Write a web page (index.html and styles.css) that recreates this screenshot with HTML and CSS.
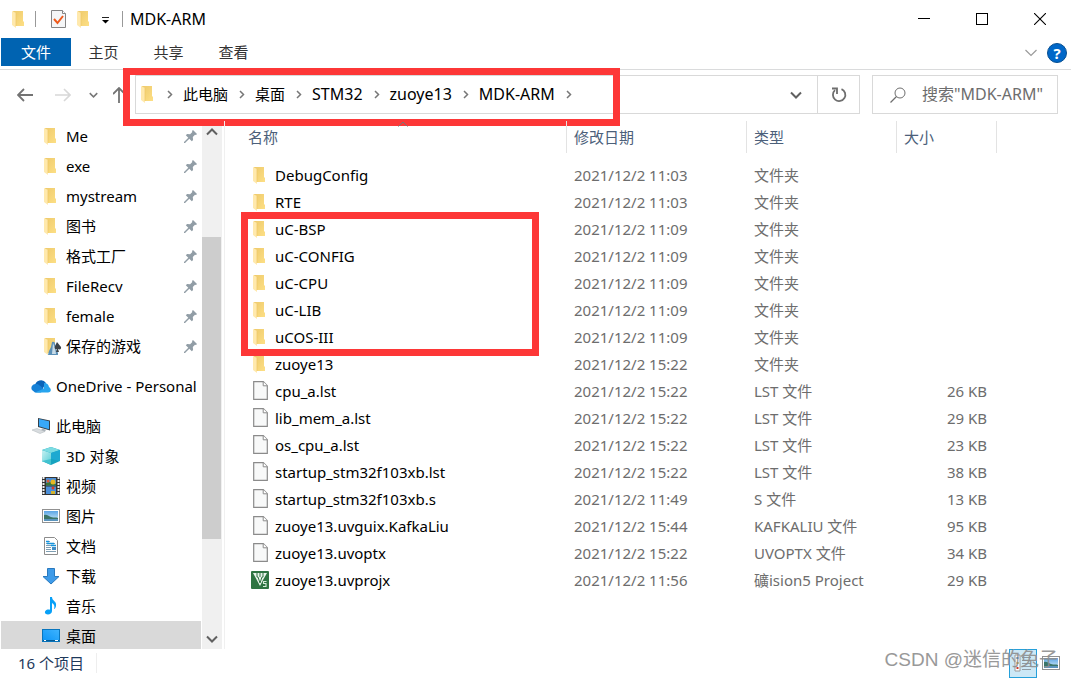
FILE: index.html
```html
<!DOCTYPE html>
<html lang="zh-CN">
<head>
    <meta charset="UTF-8">
    <meta name="viewport" content="width=device-width, initial-scale=1.0">
    <title>MDK-ARM</title>
    <link rel="stylesheet" href="styles.css">
</head>
<body>

    <!-- icons -->
    <svg class="sprite" aria-hidden="true">
        <defs>
            <linearGradient id="folderBack" x1="0" y1="0" x2="1" y2="1">
                <stop offset="0" stop-color="#eeca6c"/>
                <stop offset="1" stop-color="#fddf85"/>
            </linearGradient>
            <linearGradient id="cubeLeft" x1="0" y1="0" x2="1" y2="1">
                <stop offset="0" stop-color="#c9f1f2"/>
                <stop offset="1" stop-color="#5fd0d8"/>
            </linearGradient>
            <linearGradient id="screenBlue" x1="0" y1="1" x2="1" y2="0">
                <stop offset="0" stop-color="#0a93f5"/>
                <stop offset="1" stop-color="#3fb4ff"/>
            </linearGradient>
            <linearGradient id="sky" x1="0" y1="0" x2="0" y2="1">
                <stop offset="0" stop-color="#5aa5e6"/>
                <stop offset="1" stop-color="#d5edf8"/>
            </linearGradient>
        </defs>
        <symbol id="folder" viewBox="0 0 13 18">
            <path d="M1 1h10v10l1 1v4H3z" fill="url(#folderBack)"/>
            <path d="M0 1l4 2v15L0 15z" fill="#ffe9ad"/>
            <path d="M4 3v13" stroke="#eec765" stroke-width=".7"/>
        </symbol>
        <symbol id="file" viewBox="0 0 15 19">
            <path d="M.7.7h9.6l4 4v13.6H.7z" fill="#f8f9f9" stroke="#8b8b8b" stroke-width="1.2"/>
            <path d="M10.2.7v4.1h4.1" fill="#fff" stroke="#8b8b8b"/>
        </symbol>
        <symbol id="keil" viewBox="0 0 18 18">
            <rect width="18" height="18" rx="1" fill="#2f7442"/>
            <path d="M2 2h14l-4 7-3 6z" fill="#e8f3ea"/>
            <path d="M6 2v4h1l2 6 2-6h1V2M9 2v4" fill="none" stroke="#2f7442"/>
            <path d="M15.500 10.500h-3v2h2.500v3h-3" fill="none" stroke="#d3ead8" stroke-width="1.1"/>
        </symbol>
        <symbol id="pin" viewBox="0 0 13 13">
            <path d="M9 0l4 4-1 1-1-.3-2.200 2.200.3 3L7.800 11.200 5.300 8.700 1 13H0v-1l4.300-4.300L1.800 5.200 3.100 3.900l3 .3L8.300 2 8 1z" fill="#919da6"/>
        </symbol>
        <symbol id="chevron" viewBox="0 0 6 9">
            <path d="M1 1l3.500 3.500L1 8" fill="none" stroke="#777" stroke-width="1.500"/>
        </symbol>
        <symbol id="down" viewBox="0 0 12 8">
            <path d="M1 1.500l5 5 5-5" fill="none" stroke="currentColor" stroke-width="2"/>
        </symbol>
        <symbol id="picture" viewBox="0 0 18 14">
            <rect x=".5" y=".5" width="17" height="13" fill="#fff" stroke="#919191"/>
            <rect x="2" y="2" width="14" height="10" fill="url(#sky)"/>
            <path d="M2 6c3-1 4 1 7 2s5 0 7 1v1H2z" fill="#3b7568"/>
            <path d="M2 10h14v2H2z" fill="#5a94bd"/>
        </symbol>
    </svg>

    <div class="window">
        <header class="titlebar">
            <svg class="icon-folder"><use href="#folder"/></svg>
            <span class="divider first"></span>
            <svg class="icon-check" viewBox="0 0 15 18">
                <path d="M.5.500h11l3 3v14H.5z" fill="#f5f6f7" stroke="#858585"/>
                <path d="M11.500.500v3h3" fill="#fff" stroke="#858585"/>
                <path d="M3 9l3.500 4L12 6" fill="none" stroke="#ee5a1c" stroke-width="2"/>
            </svg>
            <svg class="icon-folder"><use href="#folder"/></svg>
            <svg class="icon-customize" viewBox="0 0 7 7"><path d="M0 .500h7" stroke="#222"/><path d="M0 3h7L3.500 6.500z" fill="#000"/></svg>
            <span class="divider"></span>
            <h1>MDK-ARM</h1>
            <div class="caption">
                <button type="button" aria-label="最小化"><svg viewBox="0 0 12 12"><path d="M0 5.500h12" stroke="#000"/></svg></button>
                <button type="button" aria-label="最大化"><svg viewBox="0 0 12 12"><rect x=".5" y=".5" width="11" height="11" fill="none" stroke="#000"/></svg></button>
                <button type="button" aria-label="关闭"><svg viewBox="0 0 12 12"><path d="M0 0l12 12M12 0L0 12" stroke="#000" stroke-width="1.100"/></svg></button>
            </div>
        </header>

        <nav class="ribbon">
            <button type="button" class="tab active">文件</button>
            <button type="button" class="tab">主页</button>
            <button type="button" class="tab">共享</button>
            <button type="button" class="tab">查看</button>
            <div class="ribbon-tools">
                <button type="button" aria-label="展开功能区"><svg class="icon-expand" viewBox="0 0 12 8"><path d="M.5 1L6 6.500 11.500 1" fill="none" stroke="#9b9b9b" stroke-width="1.200"/></svg></button>
                <button type="button" class="help" aria-label="帮助">?</button>
            </div>
        </nav>

        <div class="navbar">
            <div class="nav-buttons">
                <button type="button" aria-label="后退"><svg class="icon-arrow" viewBox="0 0 16 14"><path d="M16 7H1M7 1L1 7l6 6" fill="none" stroke="#737373" stroke-width="1.800"/></svg></button>
                <button type="button" aria-label="前进"><svg class="icon-arrow" viewBox="0 0 16 14"><path d="M0 7h15M9 1l6 6-6 6" fill="none" stroke="#d8d8d8" stroke-width="1.600"/></svg></button>
                <button type="button" class="recent" aria-label="最近浏览的位置"><svg class="icon-recent"><use href="#down"/></svg></button>
                <button type="button" class="up" aria-label="上移"><svg class="icon-up" viewBox="0 0 12 16"><path d="M6 16V1M0 7l6-6 6 6" fill="none" stroke="#737373" stroke-width="1.800"/></svg></button>
            </div>
            <div class="address">
                <div class="crumbs">
                    <svg class="icon-folder"><use href="#folder"/></svg>
                    <svg class="icon-chevron"><use href="#chevron"/></svg>
                    <a href="#">此电脑</a>
                    <svg class="icon-chevron"><use href="#chevron"/></svg>
                    <a href="#">桌面</a>
                    <svg class="icon-chevron"><use href="#chevron"/></svg>
                    <a href="#" class="latin">STM32</a>
                    <svg class="icon-chevron"><use href="#chevron"/></svg>
                    <a href="#" class="latin">zuoye13</a>
                    <svg class="icon-chevron"><use href="#chevron"/></svg>
                    <a href="#" class="latin">MDK-ARM</a>
                    <svg class="icon-chevron"><use href="#chevron"/></svg>
                </div>
                <button type="button" class="history" aria-label="以前的位置"><svg class="icon-down"><use href="#down"/></svg></button>
                <button type="button" class="refresh" aria-label="刷新">
                    <svg viewBox="0 0 16 16"><path d="M10.500 2.100A6.200 6.200 0 1 1 4 3.200" fill="none" stroke="#6e6e6e" stroke-width="1.800"/><path d="M1 1.500h5V7" fill="none" stroke="#6e6e6e" stroke-width="1.800"/></svg>
                </button>
            </div>
            <label class="search">
                <svg viewBox="0 0 16 16"><circle cx="10" cy="6" r="5" fill="none" stroke="#6e6e6e"/><path d="M6.500 9.500L.5 15.500" stroke="#6e6e6e" stroke-width="1.200"/></svg>
                <input type="text" placeholder='搜索"MDK-ARM"' aria-label="搜索">
            </label>
            <div class="mark mark-path"></div>
        </div>

        <div class="main">
            <aside class="sidebar">
                <ul class="tree">
                    <li class="child"><svg class="icon-folder"><use href="#folder"/></svg><span>Me</span><svg class="icon-pin"><use href="#pin"/></svg></li>
                    <li class="child"><svg class="icon-folder"><use href="#folder"/></svg><span>exe</span><svg class="icon-pin"><use href="#pin"/></svg></li>
                    <li class="child"><svg class="icon-folder"><use href="#folder"/></svg><span>mystream</span><svg class="icon-pin"><use href="#pin"/></svg></li>
                    <li class="child"><svg class="icon-folder"><use href="#folder"/></svg><span>图书</span><svg class="icon-pin"><use href="#pin"/></svg></li>
                    <li class="child"><svg class="icon-folder"><use href="#folder"/></svg><span>格式工厂</span><svg class="icon-pin"><use href="#pin"/></svg></li>
                    <li class="child"><svg class="icon-folder"><use href="#folder"/></svg><span>FileRecv</span><svg class="icon-pin"><use href="#pin"/></svg></li>
                    <li class="child"><svg class="icon-folder"><use href="#folder"/></svg><span>female</span><svg class="icon-pin"><use href="#pin"/></svg></li>
                    <li class="child">
                        <svg class="icon-games" viewBox="0 0 18 18">
                            <use href="#folder" width="13" height="18"/>
                            <path d="M8 5a2 2 0 0 1 3 2l1 5 2 4v2H4l1-4 2-4z" fill="#5c91b8"/>
                            <path d="M9 6l2 5 1 6H8z" fill="#c8dbe7"/>
                            <path d="M13 5l4 5c.500 2-1 3-3 2l1 3h-3l1-3c-2 1-3-1-2-3z" fill="#3c4247"/>
                        </svg>
                        <span>保存的游戏</span><svg class="icon-pin"><use href="#pin"/></svg>
                    </li>
                </ul>
                <ul class="tree">
                    <li class="root">
                        <svg class="icon-root" viewBox="0 0 20 18">
                            <path d="M4 9a6 6 0 0 1 11-3l-4 7H2z" fill="#0a63b8"/>
                            <path d="M1 13a4 4 0 0 1 4-6c3 0 4 2 8 5l-3 3.500H4z" fill="#1581d7"/>
                            <path d="M13 6a5 5 0 0 1 5 4c3 2 2 5.500-1 5.500H4l9-4z" fill="#27a4ee"/>
                        </svg>
                        <span>OneDrive - Personal</span>
                    </li>
                </ul>
                <ul class="tree">
                    <li class="root">
                        <svg class="icon-root" viewBox="0 0 20 18">
                            <path d="M7 1l12 2.500v10L7 10z" fill="#35404a"/>
                            <path d="M8 2l10 2.300v8L8 9.200z" fill="#38a8f8"/>
                            <path d="M11 11.500l4 1.200-1 2-4-1z" fill="#aab2b9"/>
                            <path d="M1 13l5-1.500 8 3-5 2z" fill="#d8dcdf" stroke="#b6bcc0" stroke-width=".6"/>
                        </svg>
                        <span>此电脑</span>
                    </li>
                    <li class="child">
                        <svg class="icon-item" viewBox="0 0 18 18">
                            <path d="M9 0l9 3v11l-9 4-9-4V3z" fill="#16a3bf"/>
                            <path d="M0 3l9 3v7l-9 2z" fill="url(#cubeLeft)"/>
                            <path d="M9 0l9 3-9 3-9-3z" fill="#7ddce2"/>
                            <path d="M9 6l9-3v11l-9-2z" fill="#1ea9d1"/>
                            <path d="M0 14l9-2v6z" fill="#42c2cf"/>
                        </svg>
                        <span>3D 对象</span>
                    </li>
                    <li class="child">
                        <svg class="icon-item" viewBox="0 0 18 18">
                            <rect width="18" height="18" fill="#333"/>
                            <path d="M1.500 0v18M16.500 0v18" stroke="#eee" stroke-width="2" stroke-dasharray="2 1"/>
                            <rect x="4" y="1" width="10" height="7.500" fill="#4b8fd9"/>
                            <rect x="4" y="9.500" width="10" height="7.500" fill="#4b8fd9"/>
                            <path d="M4 6l4-1 6 2v1.500H4z" fill="#3b7835"/>
                            <circle cx="11" cy="5" r="2.500" fill="#e8b722"/>
                            <circle cx="11" cy="11" r="1.500" fill="#d83a25"/>
                            <path d="M9 14h4v3H9z" fill="#d4b42e"/>
                            <circle cx="6" cy="4" r="1.500" fill="#db5c34"/>
                        </svg>
                        <span>视频</span>
                    </li>
                    <li class="child"><svg class="icon-item"><use href="#picture"/></svg><span>图片</span></li>
                    <li class="child">
                        <svg class="icon-item" viewBox="0 0 18 18">
                            <path d="M2.500.500h10l3 3v14h-13z" fill="#fff" stroke="#8c8c8c"/>
                            <path d="M4 4.500h4M4 6.500h9M4 8.500h10M4 10.500h5M4 12.500h5M4 14.500h10" stroke="#7e9eb3"/>
                            <path d="M4 4.500h3M5 6.500h7M9 8.500h5" stroke="#1694dc" stroke-width="1.300"/>
                            <path d="M10 10h4v3h-4z" fill="#418dc5"/>
                        </svg>
                        <span>文档</span>
                    </li>
                    <li class="child"><svg class="icon-item" viewBox="0 0 18 18"><path d="M5.500 1.500h7v8H17L9 17 1 9.500h4.500z" fill="#3e9be9" stroke="#2979be"/></svg><span>下载</span></li>
                    <li class="child"><svg class="icon-item" viewBox="0 0 18 18"><path d="M8 0h2c0 4 5 4 4 9-.2 1.500-1 3-2 3 1-3 0-5-2-6v8c0 2-2 3.500-4 3.500-4 0-4-4-.5-5 1-.2 2 0 2.500.200z" fill="#08a0f7"/></svg><span>音乐</span></li>
                    <li class="child selected"><svg class="icon-item" viewBox="0 0 18 18"><rect x=".5" y="2.500" width="17" height="12" fill="url(#screenBlue)" stroke="#0875bd"/><path d="M1 13.500h16" stroke="#065a94"/><path d="M2 13.500h2M13 13.500h3" stroke="#fff"/></svg><span>桌面</span></li>
                </ul>
            </aside>
            <div class="scrollbar">
                <button type="button" aria-label="向上滚动"><svg class="icon-down flip"><use href="#down"/></svg></button>
                <div class="track"><div class="thumb"></div></div>
                <button type="button" aria-label="向下滚动"><svg class="icon-down"><use href="#down"/></svg></button>
            </div>

            <main class="files">
                <table>
                    <colgroup>
                        <col class="col-name">
                        <col class="col-date">
                        <col class="col-type">
                        <col class="col-size">
                    </colgroup>
                    <thead>
                        <tr><th>名称<svg class="icon-sort" viewBox="0 0 10 6"><path d="M.5 5.500L5 1l4.500 4.500" fill="none" stroke="#777"/></svg></th><th>修改日期</th><th>类型</th><th>大小</th></tr>
                    </thead>
                    <tbody>
                        <tr><td><svg class="icon-folder"><use href="#folder"/></svg>DebugConfig</td><td>2021/12/2 11:03</td><td>文件夹</td><td></td></tr>
                        <tr><td><svg class="icon-folder"><use href="#folder"/></svg>RTE</td><td>2021/12/2 11:03</td><td>文件夹</td><td></td></tr>
                        <tr><td><svg class="icon-folder"><use href="#folder"/></svg>uC-BSP</td><td>2021/12/2 11:09</td><td>文件夹</td><td></td></tr>
                        <tr><td><svg class="icon-folder"><use href="#folder"/></svg>uC-CONFIG</td><td>2021/12/2 11:09</td><td>文件夹</td><td></td></tr>
                        <tr><td><svg class="icon-folder"><use href="#folder"/></svg>uC-CPU</td><td>2021/12/2 11:09</td><td>文件夹</td><td></td></tr>
                        <tr><td><svg class="icon-folder"><use href="#folder"/></svg>uC-LIB</td><td>2021/12/2 11:09</td><td>文件夹</td><td></td></tr>
                        <tr><td><svg class="icon-folder"><use href="#folder"/></svg>uCOS-III</td><td>2021/12/2 11:09</td><td>文件夹</td><td></td></tr>
                        <tr><td><svg class="icon-folder"><use href="#folder"/></svg>zuoye13</td><td>2021/12/2 15:22</td><td>文件夹</td><td></td></tr>
                        <tr><td><svg class="icon-file"><use href="#file"/></svg>cpu_a.lst</td><td>2021/12/2 15:22</td><td>LST 文件</td><td>26 KB</td></tr>
                        <tr><td><svg class="icon-file"><use href="#file"/></svg>lib_mem_a.lst</td><td>2021/12/2 15:22</td><td>LST 文件</td><td>29 KB</td></tr>
                        <tr><td><svg class="icon-file"><use href="#file"/></svg>os_cpu_a.lst</td><td>2021/12/2 15:22</td><td>LST 文件</td><td>23 KB</td></tr>
                        <tr><td><svg class="icon-file"><use href="#file"/></svg>startup_stm32f103xb.lst</td><td>2021/12/2 15:22</td><td>LST 文件</td><td>38 KB</td></tr>
                        <tr><td><svg class="icon-file"><use href="#file"/></svg>startup_stm32f103xb.s</td><td>2021/12/2 11:49</td><td>S 文件</td><td>13 KB</td></tr>
                        <tr><td><svg class="icon-file"><use href="#file"/></svg>zuoye13.uvguix.KafkaLiu</td><td>2021/12/2 15:44</td><td>KAFKALIU 文件</td><td>95 KB</td></tr>
                        <tr><td><svg class="icon-file"><use href="#file"/></svg>zuoye13.uvoptx</td><td>2021/12/2 15:22</td><td>UVOPTX 文件</td><td>34 KB</td></tr>
                        <tr><td><svg class="icon-keil"><use href="#keil"/></svg>zuoye13.uvprojx</td><td>2021/12/2 11:56</td><td>礦ision5 Project</td><td>29 KB</td></tr>
                    </tbody>
                </table>
                <div class="mark mark-folders"></div>
            </main>
        </div>

        <footer class="statusbar">
            <span class="count">16 个项目</span>
            <div class="views">
                <button type="button" class="view active" aria-label="详细信息">
                    <svg viewBox="0 0 18 18">
                        <path d="M1 1h5v16H1z" fill="#fff" stroke="#999"/>
                        <path d="M8 3.500h9M8 6.500h9M8 9.500h9M8 12.500h9M8 15.500h9" stroke="#8e9aa3"/>
                        <path d="M2.500 3h2v2h-2z" fill="#3d74b8"/><path d="M2.500 8h2v2h-2z" fill="#b88b25"/><path d="M2.500 13h2v2h-2z" fill="#cf3b28"/>
                    </svg>
                </button>
                <button type="button" class="view" aria-label="大缩略图"><svg><use href="#picture"/></svg></button>
            </div>
            <div class="watermark">CSDN @迷信的兔子</div>
        </footer>
    </div>

</body>
</html>
```
FILE: styles.css
```css
* {
    box-sizing: border-box;
}

body {
    margin: 0;
    font-family: "Noto Sans", "Noto Sans CJK SC", sans-serif;
    font-size: 15px;
    line-height: 20px;
    color: #000;
    background: #fff;
}

button {
    display: flex;
    align-items: center;
    justify-content: center;
    padding: 0;
    border: none;
    background: none;
    font: inherit;
    color: inherit;
}

svg {
    display: block;
    flex: none;
}

.sprite {
    position: absolute;
    width: 0;
    height: 0;
}

.icon-folder {
    width: 13px;
    height: 18px;
}

.window {
    display: flex;
    flex-direction: column;
    height: 100vh;
    overflow: hidden;
}

/* title bar */
.titlebar {
    display: flex;
    align-items: center;
    height: 38px;
    padding-left: 12px;
}

.titlebar h1 {
    margin: 0 0 0 7px;
    font-size: 16px;
    font-weight: normal;
}

.divider {
    width: 1px;
    height: 16px;
    background: #999;
}

.divider.first {
    margin: 0 15px 0 10px;
}

.icon-check {
    width: 15px;
    height: 18px;
    margin-right: 11px;
}

.icon-customize {
    width: 7px;
    height: 7px;
    margin: 3px 13px 0 12px;
}

.caption {
    display: flex;
    margin-left: auto;
    padding-right: 2px;
}

.caption button {
    width: 58px;
    height: 38px;
}

.caption svg {
    width: 12px;
    height: 12px;
}

/* ribbon tabs */
.ribbon {
    display: flex;
    height: 32px;
    padding-left: 1px;
    border-bottom: 1px solid #dadbdc;
}

.tab {
    width: 65px;
    height: 28px;
    color: #333;
}

.tab.active {
    width: 70px;
    color: #fff;
    background: #0063b1;
}

.ribbon-tools {
    display: flex;
    align-items: center;
    gap: 10px;
    height: 30px;
    margin-left: auto;
    padding-right: 4px;
}

.icon-expand {
    width: 12px;
    height: 8px;
}

.help {
    width: 20px;
    height: 20px;
    border: 1px solid #074f91;
    border-radius: 50%;
    color: #fff;
    background: #0067c8;
    font-weight: bold;
}

/* address row */
.navbar {
    position: relative;
    display: flex;
    padding: 5px 13px 7px 17px;
}

.nav-buttons {
    display: flex;
    align-items: center;
    width: 118px;
}

.icon-arrow {
    width: 16px;
    height: 14px;
    margin-right: 22px;
}

.icon-recent {
    width: 9px;
    height: 6px;
    margin: 0 15px 0 -4px;
    color: #777;
}

.icon-up {
    width: 12px;
    height: 16px;
}

.address {
    display: flex;
    flex: 1;
    height: 39px;
    border: 1px solid #d9d9d9;
}

.crumbs {
    display: flex;
    flex: 1;
    align-items: center;
    padding: 0 0 1px 5px;
}

.crumbs a {
    color: #000;
    text-decoration: none;
}

.crumbs .latin {
    font-size: 16px;
}

.crumbs .icon-folder {
    margin-right: 2px;
}

.icon-chevron {
    width: 6px;
    height: 9px;
    margin: 0 10px 0 11px;
}

.icon-down {
    width: 12px;
    height: 8px;
    color: #606060;
}

.history {
    width: 42px;
}

.refresh {
    width: 42px;
    border-left: 1px solid #d9d9d9;
}

.refresh svg,
.search svg {
    width: 16px;
    height: 16px;
}

.search {
    display: flex;
    align-items: center;
    width: 186px;
    height: 39px;
    margin-left: 12px;
    padding-left: 17px;
    border: 1px solid #d9d9d9;
}

.search input {
    flex: 1;
    min-width: 0;
    margin-left: 16px;
    padding: 0 0 1px;
    border: none;
    outline: none;
    font: inherit;
    font-size: 16px;
}

.search input::placeholder {
    color: #6d6d6d;
}

/* red frames */
.mark {
    position: absolute;
    border: 7px solid #fd3737;
    pointer-events: none;
}

.mark-path {
    top: -2px;
    left: 123px;
    width: 497px;
    height: 58px;
}

.mark-folders {
    top: 91px;
    left: 16px;
    width: 298px;
    height: 144px;
}

/* main area */
.main {
    display: flex;
    flex: 1;
    min-height: 0;
}

.sidebar {
    width: 202px;
    padding: 0 1px;
    overflow: hidden;
}

.tree {
    margin: 0 0 10px;
    padding: 0;
    list-style: none;
}

.tree li {
    display: flex;
    align-items: center;
    height: 30px;
    white-space: nowrap;
}

.tree li.child {
    padding-left: 41px;
}

.tree li.root {
    padding-left: 30px;
}

.tree li.selected {
    background: #d9d9d9;
}

.tree .icon-folder {
    margin: 0 9px 0 2px;
}

.icon-games {
    width: 18px;
    height: 18px;
    margin: 0 4px 0 2px;
}

.icon-item {
    width: 18px;
    height: 18px;
    margin-right: 6px;
}

.icon-root {
    width: 20px;
    height: 18px;
    margin-right: 5px;
}

.icon-pin {
    width: 13px;
    height: 13px;
    margin: 0 4px 0 auto;
}

.scrollbar {
    display: flex;
    flex-direction: column;
    width: 20px;
    background: #f0f0f0;
}

.scrollbar button {
    height: 21px;
}

.flip {
    transform: rotate(180deg);
}

.track {
    display: flex;
    flex: 1;
    flex-direction: column;
}

.track::before {
    content: "";
    flex: 95;
}

.track::after {
    content: "";
    flex: 89;
}

.thumb {
    flex: 302;
    width: 19px;
    background: #cdcdcd;
}

/* file list */
.files {
    position: relative;
    flex: 1;
    margin-left: 2px;
    padding-left: 16px;
    border-left: 1px solid #f0f0f0;
}

table {
    width: 756px;
    table-layout: fixed;
    border-collapse: separate;
    border-spacing: 0;
}

.col-name {
    width: 326px;
}

.col-date {
    width: 180px;
}

.col-type {
    width: 150px;
}

.col-size {
    width: 100px;
}

th {
    position: relative;
    height: 32px;
    padding: 0 7px;
    border-right: 1px solid #e3e3e3;
    color: #4c607a;
    font-weight: normal;
    text-align: left;
}

.icon-sort {
    position: absolute;
    top: 0;
    left: 157px;
    width: 10px;
    height: 6px;
}

tbody::before {
    content: "";
    display: block;
    height: 8px;
}

td {
    height: 27px;
    padding: 0 7px;
    color: #6d6d6d;
    white-space: nowrap;
}

td:first-child {
    padding-top: 3px;
    color: #000;
}

td:last-child {
    padding-right: 10px;
    text-align: right;
}

td svg {
    display: inline-block;
    vertical-align: middle;
}

td .icon-folder {
    margin: 0 9px 3px 5px;
}

.icon-file {
    width: 15px;
    height: 19px;
    margin: 0 7px 3px 5px;
}

.icon-keil {
    width: 18px;
    height: 18px;
    margin: 0 6px 3px 3px;
}

/* status bar */
.statusbar {
    position: relative;
    display: flex;
    align-items: center;
    height: 30px;
    padding: 0 6px 2px 18px;
}

.count {
    padding-right: 12px;
    border-right: 1px solid #eee;
    color: #1e395b;
}

.views {
    display: flex;
    margin-left: auto;
}

.view {
    width: 28px;
    height: 29px;
}

.view.active {
    border: 1px solid #26a0da;
    background: #cce8f6;
}

.view svg {
    width: 18px;
    height: 18px;
}

.view:last-child svg {
    height: 14px;
}

.watermark {
    position: absolute;
    right: 13px;
    bottom: 6px;
    color: #8e8e8e;
    font-family: "Liberation Sans", "Noto Sans CJK SC", sans-serif;
    font-size: 19px;
    line-height: 26px;
    opacity: .9;
}
```
